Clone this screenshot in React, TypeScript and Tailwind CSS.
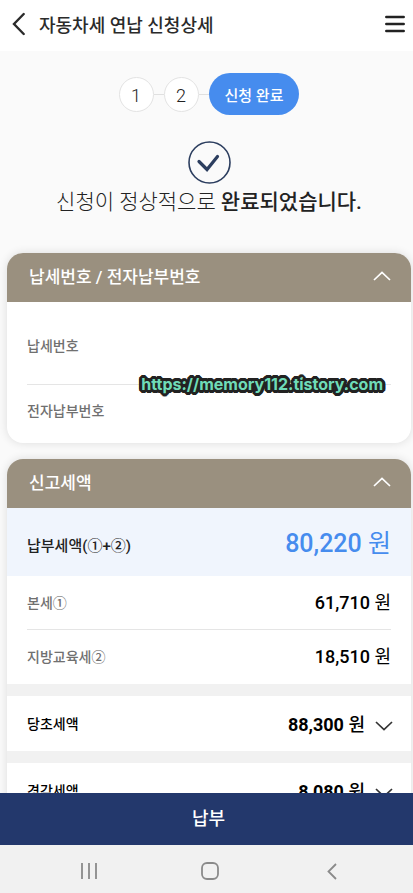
import React, { useState } from 'react';

const Chevron = ({ className = '' }: { className?: string }) => (
  <svg
    className={className}
    width="18"
    height="10"
    viewBox="0 0 18 10"
    fill="none"
    stroke="currentColor"
    strokeWidth="1.7"
    aria-hidden="true"
  >
    <path d="M1 9 9 1.5 17 9" />
  </svg>
);

const Header = () => (
  <header className="flex h-[51px] shrink-0 items-center bg-white pr-2 pl-3 text-[#2b2b2b]">
    <button type="button" aria-label="이전" className="mr-3.5 pb-1">
      <svg width="13" height="24" viewBox="0 0 13 24" fill="none" stroke="currentColor" strokeWidth="2.4" strokeLinecap="round">
        <path d="M11.7 2 2 12l9.7 10" />
      </svg>
    </button>
    <h1 className="text-lg font-medium">자동차세 연납 신청상세</h1>
    <button type="button" aria-label="메뉴" className="ml-auto pb-1 text-[#222]">
      <svg width="20" height="18" viewBox="0 0 20 18" fill="none" stroke="currentColor" strokeWidth="2.5" strokeLinecap="round">
        <path d="M1.3 2h17.4M1.3 9h17.4M1.3 16h17.4" />
      </svg>
    </button>
  </header>
);

const Steps = () => (
  <ol className="flex items-center justify-center">
    {['1', '2'].map((step) => (
      <li key={step} className="flex items-center">
        <span className="flex size-[35px] items-center justify-center rounded-full border border-[#e3e3e3] bg-white pt-1 text-lg font-light text-[#222]">
          {step}
        </span>
        <span className="h-px w-2.5 bg-[#e0e0e0]"></span>
      </li>
    ))}
    <li
      aria-current="step"
      className="flex h-[42px] items-center rounded-full bg-[#468cee] px-4 pt-1 text-[15px] font-medium text-white"
    >
      신청 완료
    </li>
  </ol>
);

type CardProps = {
  title: string;
  children: React.ReactNode;
};

const Card = ({ title, children }: CardProps) => {
  const [open, setOpen] = useState(true);

  return (
    <section className="overflow-hidden rounded-2xl bg-white shadow-[0_0_10px_rgba(0,0,0,0.12)]">
      <h2>
        <button
          type="button"
          aria-expanded={open}
          onClick={() => setOpen(!open)}
          className="flex h-[49px] w-full items-center justify-between bg-[#9a907f] pr-5 pl-[22px] text-[17px] font-medium text-white"
        >
          {title}
          <Chevron className={open ? 'mb-1' : 'rotate-180'} />
        </button>
      </h2>
      {open && children}
    </section>
  );
};

type AmountProps = {
  label: string;
  amount: string;
};

const TaxRow = ({ label, amount }: AmountProps) => (
  <div className="flex h-[54px] items-center justify-between">
    <dt className="text-sm font-medium text-[#707070]">{label}</dt>
    <dd className="text-lg font-medium text-black">
      {amount} <span className="font-normal">원</span>
    </dd>
  </div>
);

const FoldedRow = ({ label, amount }: AmountProps) => (
  <button
    type="button"
    className="flex h-[67px] w-full items-center border-t-12 border-[#f1f1f1] pr-[18px] pl-5 text-left text-black"
  >
    <span className="text-sm font-medium">{label}</span>
    <span className="ml-auto pt-0.5 text-lg font-bold">
      {amount} <span className="font-medium">원</span>
    </span>
    <Chevron className="mt-1 ml-2.5 rotate-180 text-[#333]" />
  </button>
);

const BottomBar = () => (
  <footer className="shrink-0">
    <button type="button" className="h-[52px] w-full bg-[#23386c] pl-1 text-lg font-medium text-white">
      납부
    </button>
    <nav className="grid h-12 grid-cols-3 items-center justify-items-center bg-[#f1f1f1] pt-1 pr-5 pl-7 text-[#8a8a8a]">
      <button type="button" aria-label="최근 앱">
        <svg width="16" height="18" viewBox="0 0 16 18" stroke="currentColor" strokeWidth="1.8">
          <path d="M1 1v16M8 1v16M15 1v16" />
        </svg>
      </button>
      <button type="button" aria-label="홈">
        <svg width="18" height="18" viewBox="0 0 18 18" fill="none" stroke="currentColor" strokeWidth="1.8">
          <rect x="1" y="1" width="16" height="16" rx="5" />
        </svg>
      </button>
      <button type="button" aria-label="뒤로">
        <svg width="10" height="17" viewBox="0 0 10 17" fill="none" stroke="currentColor" strokeWidth="1.8">
          <path d="M9 1 1.5 8.5 9 16" />
        </svg>
      </button>
    </nav>
  </footer>
);

export default function App() {
  return (
    <div className="flex h-screen flex-col overflow-hidden bg-[#fafafa] font-[Roboto,'Noto_Sans_CJK_KR',sans-serif]">
      <Header />

      <main className="min-h-0 flex-1 overflow-hidden pt-[22px] pr-0.5 pl-[7px]">
        <Steps />

        {/* Result message */}
        <div className="flex flex-col items-center pt-[26px] pb-8">
          <svg width="43" height="43" viewBox="0 0 43 43" fill="none" stroke="#2c3e5f" aria-hidden="true">
            <circle cx="21.5" cy="21.5" r="20.5" strokeWidth="1.6" />
            <path d="M11 20.5 19 28.5 29.5 15.5" strokeWidth="3.2" strokeLinecap="round" />
          </svg>
          <p className="text-[21px] leading-[37px] font-light text-[#222]">
            신청이 정상적으로 <strong className="font-medium">완료되었습니다.</strong>
          </p>
        </div>

        <div className="flex flex-col gap-4">
          <Card title="납세번호 / 전자납부번호">
            <dl className="relative px-5 text-sm leading-6 font-medium text-[#707070]">
              <dt className="border-b border-[#e5e5e5] pt-8 pb-[26px]">납세번호</dt>
              <dt className="pt-3.5 pb-5">전자납부번호</dt>
              <dd className="absolute top-[70px] right-7">
                <a
                  href="https://memory112.tistory.com"
                  className="font-[Inter] text-base font-bold text-[#6fdcb8] [text-shadow:3px_0_#222,-3px_0_#222,0_3px_#222,0_-3px_#222,2px_2px_#222,-2px_2px_#222,2px_-2px_#222,-2px_-2px_#222,3px_1px_#222,-3px_1px_#222,3px_-1px_#222,-3px_-1px_#222,1px_3px_#222,-1px_3px_#222,1px_-3px_#222,-1px_-3px_#222,1px_1px_#222,-1px_-1px_#222]"
                >
                  https://memory112.tistory.com
                </a>
              </dd>
            </dl>
          </Card>

          <Card title="신고세액">
            <dl>
              <div className="flex h-[68px] items-center justify-between bg-[#f0f5fd] px-5 pt-1">
                <dt className="pt-1 text-[15px] font-medium text-[#222]">납부세액(①+②)</dt>
                <dd className="text-[25px] font-medium text-[#468cee]">
                  80,220 <span className="font-normal">원</span>
                </dd>
              </div>
              <div className="divide-y divide-[#e5e5e5] px-5">
                <TaxRow label="본세①" amount="61,710" />
                <TaxRow label="지방교육세②" amount="18,510" />
              </div>
            </dl>
            <FoldedRow label="당초세액" amount="88,300" />
            <FoldedRow label="경감세액" amount="8,080" />
          </Card>
        </div>
      </main>

      <BottomBar />
    </div>
  );
}
